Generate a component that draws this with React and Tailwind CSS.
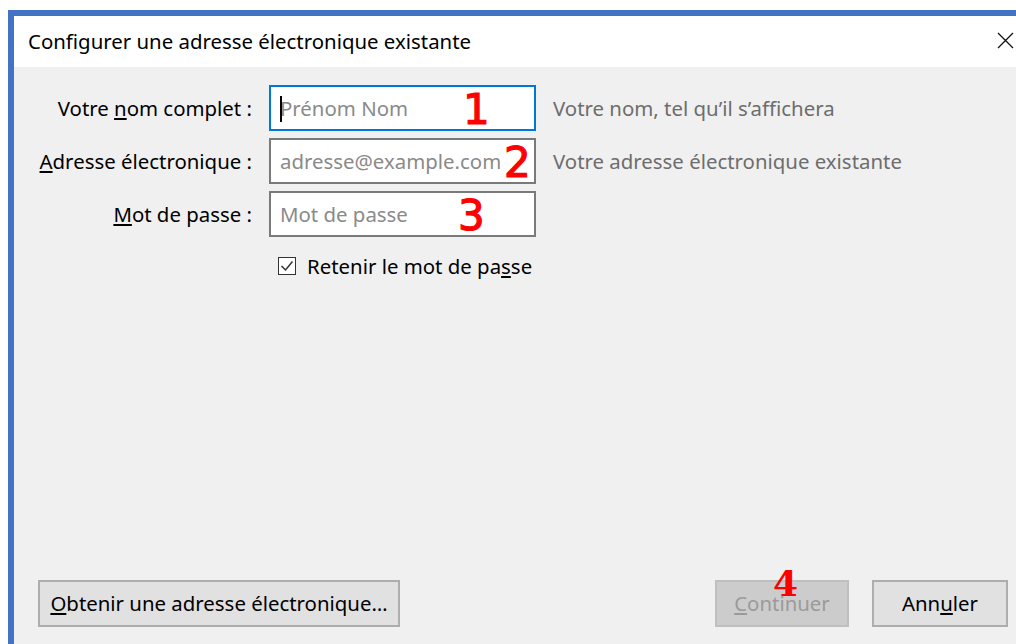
import React from 'react';

const font = { fontFamily: '"Noto Sans", "Open Sans", sans-serif' };
const markFont = { fontFamily: '"DejaVu Sans", sans-serif' };

function Field({ label, accessIndex, placeholder, hint, focused, mark, markClass }) {
  const before = label.slice(0, accessIndex);
  const key = label.slice(accessIndex, accessIndex + 1);
  const after = label.slice(accessIndex + 1);

  return (
    <div className="flex items-center h-[46px]">
      <label className="w-[239px] text-right text-[20.4px] text-[#000] pr-[1px] whitespace-nowrap">
        {before}
        <u className="underline-offset-2">{key}</u>
        {after}
      </label>
      <div
        className={`relative ml-[16px] w-[267px] h-[46px] bg-white flex items-center pl-[9px] text-[20.4px] ${
          focused ? 'border-2 border-[#0078d7]' : 'border-2 border-[#7a7a7a]'
        }`}
      >
        {focused && <span className="absolute left-[9px] top-[9px] w-[2px] h-[26px] bg-black" />}
        <span className="text-[#8a8a8a] whitespace-nowrap">{placeholder}</span>
        {/* red step number drawn over the field */}
        <span
          className={`absolute text-[42px] leading-none font-normal text-[#ff0000] [-webkit-text-stroke:1.2px_#ff0000] ${markClass}`}
          style={markFont}
        >
          {mark}
        </span>
      </div>
      {hint && <span className="ml-[17px] text-[20.4px] text-[#6d6d6d] whitespace-nowrap">{hint}</span>}
    </div>
  );
}

export default function App() {
  return (
    <div className="w-[1016px] h-[644px] bg-white pt-[10px] pl-[8px] overflow-hidden" style={font}>
      <div className="h-full flex flex-col border-t-[6px] border-l-[6px] border-[#4472c4]">
        <div className="h-[51px] bg-white flex items-center justify-between pl-[14px] pr-[2px]">
          <span className="text-[20.4px] text-black">Configurer une adresse électronique existante</span>
          <svg width="17" height="17" viewBox="0 0 17 17" className="mb-[2px]">
            <path d="M1 1 L16 16 M16 1 L1 16" stroke="#111" strokeWidth="1.3" fill="none" />
          </svg>
        </div>

        <div className="flex-1 bg-[#f0f0f0] flex flex-col pt-[18px]">
          <div className="flex flex-col gap-[7px]">
            <Field
              label="Votre nom complet :"
              accessIndex={6}
              placeholder="Prénom Nom"
              hint="Votre nom, tel qu’il s’affichera"
              focused
              mark="1"
              markClass="left-[192px] top-[2px]"
            />
            <Field
              label="Adresse électronique :"
              accessIndex={0}
              placeholder="adresse@example.com"
              hint="Votre adresse électronique existante"
              mark="2"
              markClass="left-[233px] top-[2px]"
            />
            <Field
              label="Mot de passe :"
              accessIndex={0}
              placeholder="Mot de passe"
              mark="3"
              markClass="left-[187px] top-[2px]"
            />
          </div>

          <div className="flex items-center mt-[14px] ml-[264px]">
            <span className="w-[18px] h-[18px] border border-[#333] bg-white flex items-center justify-center">
              <svg width="14" height="14" viewBox="0 0 14 14">
                <path d="M1.5 7 L5.5 11 L12.5 2.5" stroke="#333" strokeWidth="1.5" fill="none" />
              </svg>
            </span>
            <span className="ml-[11px] text-[20.4px] text-black">
              Retenir le mot de pa<u className="underline-offset-2">s</u>se
            </span>
          </div>

          <div className="mt-auto flex items-center pl-[24px] pr-[8px] pb-[17px]">
            <button className="h-[47px] w-[362px] border-2 border-[#adadad] bg-[#e1e1e1] text-[20.4px] text-black">
              <u className="underline-offset-2">O</u>btenir une adresse électronique…
            </button>
            <div className="ml-auto relative">
              <button className="h-[47px] w-[134px] border-2 border-[#bfbfbf] bg-[#cccccc] text-[20.4px] text-[#9a9a9a]">
                <u className="underline-offset-2">C</u>ontinuer
              </button>
              <span
                className="absolute left-[58px] top-[-15px] text-[36px] leading-none font-bold text-[#ff0000]"
                style={{ fontFamily: '"DejaVu Serif", serif' }}
              >
                4
              </span>
            </div>
            <button className="ml-[23px] h-[47px] w-[136px] border-2 border-[#adadad] bg-[#e1e1e1] text-[20.4px] text-black">
              Ann<u className="underline-offset-2">u</u>ler
            </button>
          </div>
        </div>
      </div>
    </div>
  );
}
